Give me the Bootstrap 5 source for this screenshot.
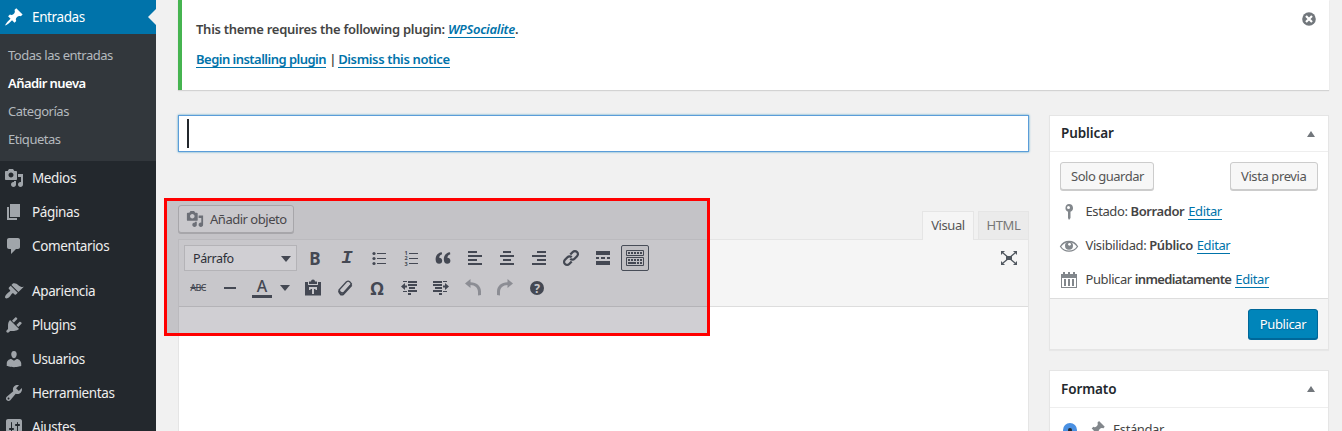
<!DOCTYPE html>
<html lang="es">
<head>
<meta charset="utf-8">
<meta name="viewport" content="width=device-width, initial-scale=1">
<title>Añadir nueva entrada</title>
<link href="https://cdn.jsdelivr.net/npm/bootstrap@5.3.0/dist/css/bootstrap.min.css" rel="stylesheet">
<style>
html,body{height:431px;overflow:hidden}
body{background:#f1f1f1;font-family:"Noto Sans",sans-serif;font-size:13px;line-height:20px;color:#444;letter-spacing:-.4px}
a{color:#0073aa;text-decoration:none;border-bottom:1px solid #0073aa;line-height:15px;display:inline-block}
b,strong{font-weight:600}
svg{display:block;fill:currentColor;flex:none}
.shell{height:431px;overflow:hidden}
.side{width:156px;height:431px;overflow:hidden;background:#23282d;flex:none}
.side .item{height:34px;font-size:13.5px;color:#eee;padding-left:4px;gap:8px;letter-spacing:-.38px}
.side .item svg{color:#a0a5aa}
.side .current{background:#0073aa;color:#fff;position:relative}
.side .current svg{color:#fff}
.side .current::after{content:"";position:absolute;right:0;top:9px;border:8px solid transparent;border-right-color:#f1f1f1;border-left:0}
.sub{background:#32373c;padding:7px 8px 8px;color:#b4b9be;letter-spacing:-.47px}
.sub div{line-height:28px;height:28px}
.sub .on{color:#fff;font-weight:600;letter-spacing:-.55px}
.side .sep{height:11px}
.page-area{padding:0 13px 0 22px;min-width:0}
.notice-box{height:90px;background:#fff;border-left:4px solid #46b450;box-shadow:0 1px 1px rgba(0,0,0,.12);padding:19px 12px 0 14px;font-weight:600;letter-spacing:-.28px}
.notice-box p{margin:0 0 10px}
.notice-box svg{margin-top:-8px}
.lk-begin{letter-spacing:-.52px}
.lk-dismiss{letter-spacing:-.36px;margin-left:-1px}
.title-box{height:37px;background:#fff;border:1px solid #5b9dd9;box-shadow:0 0 2px rgba(30,140,190,.8);padding:3px 8px;margin-top:25px}
.caret{width:2px;height:29px;background:#23282d}
.cols{gap:20px}
.aside{width:280px;flex:none;padding-top:25px}
.head-row{height:87px}
.tabs{gap:4px}
.wbtn{height:28px;border:1px solid #ccc;border-radius:3px;background:#f7f7f7;box-shadow:0 1px 0 #ccc;color:#555;padding:0 10px;line-height:26px;white-space:nowrap;letter-spacing:-.48px}
.save-btn{width:94px}
.view-btn{width:88px;letter-spacing:-.4px}
.media-btn{width:116px;padding:0 7px;gap:6px;margin-bottom:6px}
.media-btn svg{color:#82878c}
.tab-item{height:28px;width:51px;border:1px solid #e5e5e5;border-bottom:0;background:#ebebeb;color:#777;text-align:center;line-height:27px}
.tabs .tab-on{width:52px;height:29px;background:#f5f5f5;color:#555;margin-bottom:-1px;position:relative}
.mce{border:1px solid #e5e5e5;height:200px;background:#fff}
.bar{background:#f5f5f5;border-bottom:1px solid #ddd;height:67px;padding:5px 5px 0;color:#50575f;gap:4px}
.rowb{height:26px;gap:4px}
.ic{width:28px;height:26px;display:flex;align-items:center;justify-content:center;letter-spacing:0}
.sel{width:113px;height:26px;border:1px solid #ddd;background:#fff;color:#32373c;padding:1px 5px 0 8px;font-size:12.5px}
.ic-on{border:1px solid #555d66;border-radius:2px;background:#ebebeb}
.ic-b{font-weight:700;font-size:17px;padding-top:1px}
.ic-i{font:italic bold 19px "Liberation Mono",monospace}
.ic-abc{font-size:9px;font-weight:500;text-decoration:line-through;letter-spacing:-.7px}
.color-pick{width:47px}
.color-pick>div{gap:8px;padding-right:1px}
.ic-a{font-size:16px;font-weight:500;line-height:15px;border-bottom:3px solid;width:20px;height:19px;text-align:center}
.ic-o{font:bold 18px "Noto Sans",sans-serif}
.dim{opacity:.45}
.down{border:5px solid transparent;border-top:6px solid #50575f;border-bottom:0}
.up{border:4.5px solid transparent;border-bottom:6px solid #72777c;border-top:0}
.box{background:#fff;border:1px solid #e5e5e5;box-shadow:0 1px 1px rgba(0,0,0,.04)}
.box-h{height:36px;border-bottom:1px solid #eee;padding:0 13px 1px 11px;font-size:13.5px;font-weight:600;color:#23282d;letter-spacing:-.1px}
.box-h .up{margin-top:1px}
.acts{padding:10px 10px 5px}
.status{height:34px;gap:6.5px;padding-left:9px}
.status svg{color:#82878c}
.status span{padding-bottom:2px}
.status a{margin-left:1px}
.now{letter-spacing:-.65px}
.foot{height:51px;border-top:1px solid #ddd;background:#f5f5f5;padding:10px 10px 0;margin-top:1px}
.pub{width:70px;height:30px;border:1px solid #006799;border-radius:3px;background:#0085ba;color:#fff;box-shadow:0 1px 0 #006799;line-height:28px;text-align:center;text-shadow:0 1px 1px #006799}
.second{margin-top:20px}
.second .box-h{height:37px}
.fmt{padding:12px 13px;gap:11px}
.fmt svg{color:#82878c;margin-top:-2px}
.fmt span{margin-left:-4px;margin-top:-1px}
.radio-dot{width:14px;height:14px;border-radius:50%;background:#23282d;border:5px solid #4a90e2}
.highlight{position:absolute;left:164px;top:198px;width:546px;height:138px;border:3px solid #f00;background:rgba(20,15,35,.2)}
</style>
</head>
<body>
<svg width="0" height="0" class="position-absolute"><defs>
<symbol id="pin" viewBox="0 0 20 20"><path d="M10.44 3.02l1.82-1.82 6.36 6.35-1.83 1.82c-1.05-.68-2.48-.57-3.41.36l-.75.75c-.92.93-1.04 2.35-.35 3.41l-1.83 1.82-2.41-2.41-2.8 2.79c-.42.42-3.38 2.71-3.8 2.29s1.86-3.39 2.28-3.81l2.79-2.79L4.1 9.36l1.83-1.82c1.05.69 2.48.57 3.4-.36l.75-.75c.93-.92 1.05-2.35.36-3.41z"/></symbol>
<symbol id="media" viewBox="0 0 20 20"><path d="M13 11V4c0-.55-.45-1-1-1h-1.67L9 1H5L3.67 3H2c-.55 0-1 .45-1 1v7c0 .55.45 1 1 1h10c.55 0 1-.45 1-1zM7 4.5c1.38 0 2.5 1.12 2.5 2.5S8.38 9.5 7 9.5 4.5 8.38 4.5 7 5.62 4.5 7 4.5zM14 6h5v10.5c0 1.38-1.12 2.5-2.5 2.5S14 17.88 14 16.5s1.12-2.5 2.5-2.5c.17 0 .34.02.5.05V9h-3V6zm-4 8.05V13h2v3.5c0 1.38-1.12 2.5-2.5 2.5S7 17.88 7 16.5 8.12 14 9.5 14c.17 0 .34.02.5.05z"/></symbol>
</defs></svg>
<div class="shell d-flex">
<nav class="side">
  <div class="item current d-flex align-items-center"><svg width="20" height="20"><use href="#pin"/></svg><span>Entradas</span></div>
  <div class="sub"><div>Todas las entradas</div><div class="on">Añadir nueva</div><div>Categorías</div><div>Etiquetas</div></div>
  <div class="item d-flex align-items-center"><svg width="20" height="20"><use href="#media"/></svg><span>Medios</span></div>
  <div class="item d-flex align-items-center"><svg width="20" height="20" viewBox="0 0 20 20"><path d="M6 15V2h10v13H6zm-1 1h8v2H3V5h2v11z"/></svg><span>Páginas</span></div>
  <div class="item d-flex align-items-center"><svg width="20" height="20" viewBox="0 0 20 20"><path d="M5 2h9c1.1 0 2 .9 2 2v7c0 1.1-.9 2-2 2h-2l-5 5v-5H5c-1.1 0-2-.9-2-2V4c0-1.1.9-2 2-2z"/></svg><span>Comentarios</span></div>
  <div class="sep"></div>
  <div class="item d-flex align-items-center"><svg width="20" height="20" viewBox="0 0 20 20"><path d="M14.48 11.06L7.41 3.99l1.5-1.5c.5-.56 2.3-.47 3.51.32 1.21.8 1.43 1.28 2.91 2.1 1.18.64 2.45 1.26 4.45.85zm-.71.71L6.7 4.7 4.93 6.47c-.39.39-.39 1.02 0 1.41l1.06 1.06c.39.39.39 1.03 0 1.42-.6.6-1.43 1.11-2.21 1.69-.35.26-.7.53-1.01.84C1.43 14.23.4 16.08 1.4 17.07c.99 1 2.84-.03 4.18-1.36.31-.31.58-.66.85-1.02.57-.78 1.08-1.61 1.69-2.21.39-.39 1.02-.39 1.41 0l1.06 1.06c.39.39 1.02.39 1.41 0z"/></svg><span>Apariencia</span></div>
  <div class="item d-flex align-items-center"><svg width="20" height="20" viewBox="0 0 20 20"><path d="M13.11 4.36L9.87 7.6 8 5.73l3.24-3.24c.35-.34 1.05-.2 1.56.32.52.51.66 1.21.31 1.55zm-8 1.77l.91-1.12 9.01 9.01-1.19.84c-.71.71-2.63 1.16-3.82 1.16H6.14L4.9 17.26c-.59.59-1.54.59-2.12 0-.59-.58-.59-1.53 0-2.12l1.24-1.24v-3.88c0-1.13.4-3.19 1.09-3.89zm7.26 3.97l3.24-3.24c.34-.35 1.04-.21 1.55.31.52.51.66 1.21.31 1.55l-3.24 3.25z"/></svg><span>Plugins</span></div>
  <div class="item d-flex align-items-center"><svg width="20" height="20" viewBox="0 0 20 20"><path d="M10 9.25c-2.27 0-2.73-3.44-2.73-3.44C7 4.02 7.82 2 9.97 2c2.16 0 2.98 2.02 2.71 3.81 0 0-.41 3.44-2.68 3.44zm0 2.57L12.72 10c2.39 0 4.52 2.33 4.52 4.53v2.49s-3.65 1.13-7.24 1.13c-3.65 0-7.24-1.13-7.24-1.13v-2.49c0-2.25 1.94-4.48 4.47-4.48z"/></svg><span>Usuarios</span></div>
  <div class="item d-flex align-items-center"><svg width="20" height="20" viewBox="0 0 20 20"><path d="M16.68 9.77c-1.34 1.34-3.3 1.67-4.95.99l-5.41 6.52c-.99.99-2.59.99-3.58 0s-.99-2.59 0-3.57l6.52-5.42c-.68-1.65-.35-3.61.99-4.95 1.28-1.28 3.12-1.62 4.72-1.06l-2.89 2.89 2.82 2.82 2.86-2.87c.53 1.58.18 3.39-1.08 4.65zM3.81 16.21c.4.39 1.04.39 1.43 0 .4-.4.4-1.04 0-1.43-.39-.4-1.03-.4-1.43 0-.39.39-.39 1.03 0 1.43z"/></svg><span>Herramientas</span></div>
  <div class="item d-flex align-items-center"><svg width="20" height="20" viewBox="0 0 20 20"><path fill-rule="evenodd" d="M18 16V4c0-1.1-.9-2-2-2H4c-1.1 0-2 .9-2 2v12c0 1.1.9 2 2 2h12c1.1 0 2-.9 2-2zM8 11h1c.55 0 1 .45 1 1s-.45 1-1 1H8v1.5c0 .28-.22.5-.5.5s-.5-.22-.5-.5V13H6c-.55 0-1-.45-1-1s.45-1 1-1h1V5.5c0-.28.22-.5.5-.5s.5.22.5.5V11zm5-2h-1c-.55 0-1-.45-1-1s.45-1 1-1h1V5.5c0-.28.22-.5.5-.5s.5.22.5.5V7h1c.55 0 1 .45 1 1s-.45 1-1 1h-1v5.5c0 .28-.22.5-.5.5s-.5-.22-.5-.5V9z"/></svg><span>Ajustes</span></div>
</nav>
<main class="page-area flex-grow-1">
  <div class="notice-box d-flex justify-content-between">
    <div><p>This theme requires the following plugin: <a href="#"><em>WPSocialite</em></a>.</p><p><a class="lk-begin" href="#">Begin installing plugin</a> | <a class="lk-dismiss" href="#">Dismiss this notice</a></p></div>
    <svg width="16" height="16" viewBox="0 0 16 16"><circle cx="8" cy="8" r="6.8" fill="#72777c"/><path d="M5 5l6 6M11 5l-6 6" stroke="#fff" stroke-width="2.2"/></svg>
  </div>
  <div class="cols d-flex">
    <section class="flex-grow-1">
      <div class="title-box"><div class="caret"></div></div>
      <div class="head-row d-flex justify-content-between">
        <div class="wbtn media-btn d-flex align-items-center mt-auto"><svg width="18" height="18"><use href="#media"/></svg><span>Añadir objeto</span></div>
        <div class="d-flex align-items-end tabs"><div class="tab-item tab-on">Visual</div><div class="tab-item">HTML</div></div>
      </div>
      <div class="mce">
        <div class="bar d-flex flex-column">
          <div class="rowb d-flex">
            <div class="sel d-flex align-items-center justify-content-between"><span>Párrafo</span><i class="down"></i></div>
            <div class="ic ic-b">B</div><div class="ic ic-i">I</div>
            <div class="ic"><svg width="20" height="20"><path d="M8 5h9v1H8zm0 5h9v1H8zm0 5h9v1H8z"/><circle cx="5" cy="5.5" r="1.6"/><circle cx="5" cy="10.5" r="1.6"/><circle cx="5" cy="15.5" r="1.6"/></svg></div>
            <div class="ic"><svg width="20" height="20"><path d="M8 5h9v1H8zm0 5h9v1H8zm0 5h9v1H8z"/><g font-size="5.5" font-weight="700"><text x="3.5" y="7">1</text><text x="3.5" y="12.3">2</text><text x="3.5" y="17.6">3</text></g></svg></div>
            <div class="ic"><svg width="20" height="20"><path d="M8.8 4.3C5 4.6 2.6 7.5 2.6 11.2c0 3 1.4 4.6 3.5 4.6 1.9 0 3.1-1.3 3.1-3.1 0-1.9-1.3-3-3-3 .1-1.7 1.2-3 2.9-3.5zM17 4.300c-3.800.3-6.200 3.200-6.200 6.900 0 3 1.400 4.600 3.500 4.600 1.900 0 3.100-1.300 3.100-3.100 0-1.900-1.300-3-3-3 .1-1.700 1.200-3 2.900-3.500z"/></svg></div>
            <div class="ic"><svg width="20" height="20"><path d="M3 3h9v2H3zm0 4h14v2H3zm0 4h9v2H3zm0 4h14v2H3z"/></svg></div>
            <div class="ic"><svg width="20" height="20"><path d="M6 3h8v2H6zM3 7h14v2H3zm3 4h8v2H6zm-3 4h14v2H3z"/></svg></div>
            <div class="ic"><svg width="20" height="20"><path d="M8 3h9v2H8zM3 7h14v2H3zm5 4h9v2H8zm-5 4h14v2H3z"/></svg></div>
            <div class="ic"><svg width="20" height="20"><g transform="rotate(-45 10 10)" fill="none" stroke="currentColor" stroke-width="2.3"><path d="M8 13H4.500a3 3 0 010-6H8a3 3 0 013 3M12 7h3.500a3 3 0 010 6H12a3 3 0 01-3-3"/></g></svg></div>
            <div class="ic"><svg width="20" height="20"><path d="M3 3h14v4H3zm0 6h3v2H3zm5 0h4v2H8zm6 0h3v2h-3zM3 13h14v4H3z"/></svg></div>
            <div class="ic ic-on"><svg width="20" height="20"><g fill="none" stroke="currentColor"><path d="M1.500 2.500h17v5h-17zM1.500 9.500h17v8h-17z"/><path stroke-width="2" stroke-dasharray="2 1" d="M3 5h14M3 12h14"/><path stroke-width="2" stroke-dasharray="8 1 2 1 2" d="M3 15h14"/></g></svg></div>
            <div class="ic ms-auto"><svg width="20" height="20"><path d="M7 8h6v4H7zM2 3h4L2 7zM18 3h-4l4 4zM2 17h4l-4-4zM18 17h-4l4-4z"/><path d="M4 5l12 10M16 5L4 15" stroke="currentColor" stroke-width="1.3"/></svg></div>
          </div>
          <div class="rowb d-flex">
            <div class="ic ic-abc">ABC</div>
            <div class="ic"><svg width="20" height="20"><path d="M4 9h12v2H4z"/></svg></div>
            <div class="ic color-pick"><div class="d-flex align-items-center"><span class="ic-a">A</span><i class="down"></i></div></div>
            <div class="ic"><svg width="20" height="20"><path fill-rule="evenodd" d="M2 4h3v3h10V4h3v13.500H2zM6 9v3h1.500v-1H9v5h2v-5h1.500v1H14V9z"/><path d="M6 6V3.500h2a2 2 0 014 0h2V6z"/></svg></div>
            <div class="ic"><svg width="20" height="20"><g fill="none" stroke="currentColor" stroke-linejoin="round"><path d="M4 12l7.500-8.200c.8-.6 2.500-.6 3.300 0L16.500 6 8.500 15 5 14z" stroke-width="1.300"/><path d="M4 12.500c.2 1.500 1 3 2 3.800h2l8.500-9.300" stroke-width="2.200"/></g></svg></div>
            <div class="ic ic-o">Ω</div>
            <div class="ic"><svg width="20" height="20"><path d="M4 3h4v1H4zM9 3h9v2H9zM9 6h9v2H9zM10 9h6v2h-6zM9 12h9v2H9zM4 13h4v1H4zM9 15h3v2H9zM2 8.500L6 5v2.500h2v2H6V12z"/></svg></div>
            <div class="ic"><svg width="20" height="20"><path d="M12 3h4v1h-4zM2 3h9v2H2zM2 6h9v2H2zM4 9h7v2H4zM2 12h9v2H2zM12 13h4v1h-4zM8 15h3v2H8zM18 8.500L14 5v2.500h-2v2h2V12z"/></svg></div>
            <div class="ic dim"><svg width="20" height="20"><path d="M7.500 1v3.200C13.500 4.200 18 8 18 13.500V17l-3 .5V14c0-4-3-7-7.500-7v3L2 5.500z"/></svg></div>
            <div class="ic dim"><svg width="20" height="20"><path d="M12.500 1v3.200C6.500 4.200 2 8 2 13.500V17l3 .5V14c0-4 3-7 7.500-7v3L18 5.500z"/></svg></div>
            <div class="ic"><svg width="20" height="20"><circle cx="10" cy="10" r="7"/><text x="10" y="14.500" text-anchor="middle" font-size="12" font-weight="700" fill="#f5f5f5">?</text></svg></div>
          </div>
        </div>
      </div>
    </section>
    <aside class="aside">
      <div class="box">
        <div class="box-h d-flex align-items-center justify-content-between"><span>Publicar</span><i class="up"></i></div>
        <div class="d-flex justify-content-between acts"><div class="wbtn save-btn">Solo guardar</div><div class="wbtn view-btn">Vista previa</div></div>
        <div class="status d-flex align-items-center"><svg width="20" height="20"><path fill-rule="evenodd" d="M10 2a4 4 0 011.500 7.700V16L10 18l-1-2V9.700A4 4 0 0110 2zM9.500 4a1.500 1.500 0 100 3 1.500 1.500 0 000-3z"/></svg><span>Estado: <b>Borrador</b> <a href="#">Editar</a></span></div>
        <div class="status d-flex align-items-center"><svg width="20" height="20"><path d="M1.500 10.500C5.500 3.800 14.500 3.800 18.500 10.500 14.500 16.700 5.500 16.700 1.500 10.500z" fill="none" stroke="currentColor" stroke-width="1.300"/><circle cx="10" cy="9.800" r="4"/><circle cx="10.500" cy="8.300" r="1.400" fill="#fff"/></svg><span>Visibilidad: <b>Público</b> <a href="#">Editar</a></span></div>
        <div class="status d-flex align-items-center"><svg width="20" height="20"><path fill-rule="evenodd" d="M2 4h2V2h2v2h3V2h2v2h3V2h2v2h2v14H2zm1 4v9h14V8z"/><path d="M5 9h2v7H5zm4 0h2v7H9zm4 0h2v7h-2z"/></svg><span>Publicar <b class="now">inmediatamente</b> <a href="#">Editar</a></span></div>
        <div class="foot d-flex justify-content-end"><div class="pub">Publicar</div></div>
      </div>
      <div class="box second">
        <div class="box-h d-flex align-items-center justify-content-between"><span>Formato</span><i class="up"></i></div>
        <div class="d-flex align-items-center fmt"><i class="radio-dot"></i><svg width="18" height="18"><use href="#pin"/></svg><span>Estándar</span></div>
      </div>
    </aside>
  </div>
</main>
</div>
<div class="highlight"></div>
</body>
</html>
